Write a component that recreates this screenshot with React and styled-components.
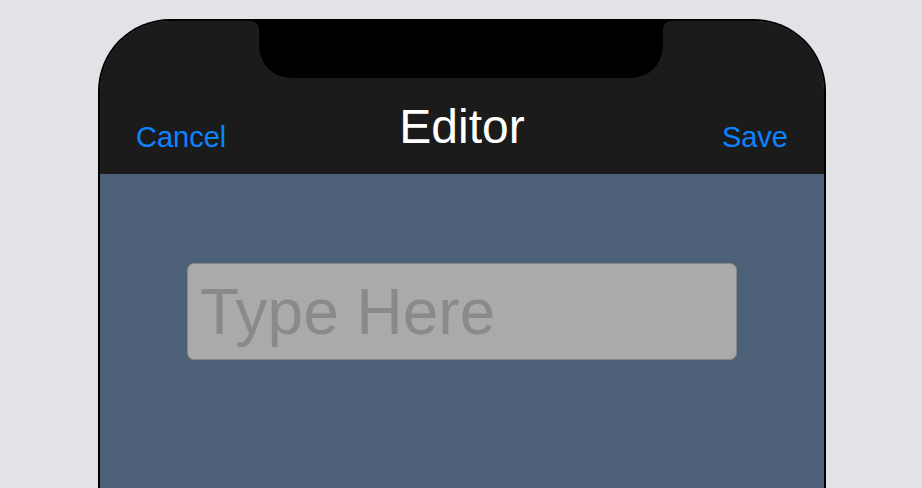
import React from "react";
import styled, { createGlobalStyle } from "styled-components";

const GlobalStyle = createGlobalStyle`
  html, body {
    margin: 0;
    padding: 0;
    height: 100%;
    overflow: hidden;
    background: #e2e3e7;
  }
  body {
    font-family: "Liberation Sans", Arial, sans-serif;
  }
`;

const Editor = () => {
  const [text, setText] = React.useState("");
  return (
    <>
      <GlobalStyle />
      <Page>
        <Phone>
          <Notch />
          <NavBar>
            <NavButton>Cancel</NavButton>
            <Title>Editor</Title>
            <NavButton $end>Save</NavButton>
          </NavBar>
          <Content>
            <TextField
              placeholder="Type Here"
              value={text}
              onChange={(e) => setText(e.target.value)}
            />
          </Content>
        </Phone>
      </Page>
    </>
  );
};

export default Editor;

const Page = styled.div`
  display: flex;
  justify-content: center;
  padding: 19px 0 0 2px;
  height: 100vh;
  box-sizing: border-box;
  overflow: hidden;
`;

const Phone = styled.div`
  position: relative;
  width: 728px;
  height: 100%;
  box-sizing: border-box;
  border: 2px solid #000;
  border-bottom: none;
  border-radius: 72px 72px 0 0;
  background: #4c6178;
  overflow: hidden;
  display: flex;
  flex-direction: column;
`;

const Notch = styled.div`
  position: absolute;
  top: 0;
  left: 159px;
  width: 404px;
  height: 57px;
  background: #000;
  border-radius: 0 0 32px 32px;

  &::before,
  &::after {
    content: "";
    position: absolute;
    top: 0;
    width: 8px;
    height: 8px;
  }
  &::before {
    left: -8px;
    background: radial-gradient(circle at 0 100%, transparent 7.5px, #000 8px);
  }
  &::after {
    right: -8px;
    background: radial-gradient(circle at 100% 100%, transparent 7.5px, #000 8px);
  }
`;

const NavBar = styled.header`
  height: 153px;
  flex-shrink: 0;
  box-sizing: border-box;
  background: #1b1b1b;
  display: grid;
  grid-template-columns: 1fr auto 1fr;
  align-items: end;
  padding: 0 36px 22px;
`;

const NavButton = styled.button`
  justify-self: ${(p) => (p.$end ? "end" : "start")};
  border: none;
  background: none;
  padding: 0;
  font-family: inherit;
  font-size: 29px;
  line-height: 1;
  color: #0a84ff;
  cursor: pointer;
`;

const Title = styled.h1`
  margin: 0 0 1px;
  font-size: 48px;
  font-weight: 400;
  line-height: 1;
  color: #fff;
`;

const Content = styled.main`
  flex: 1;
  display: flex;
  justify-content: center;
  align-items: flex-start;
  padding-top: 89px;
`;

const TextField = styled.input`
  width: 550px;
  height: 97px;
  box-sizing: border-box;
  padding: 0 12px;
  border: 1.5px solid #878787;
  border-radius: 7px;
  background: #aaaaaa;
  font-family: inherit;
  font-size: 64px;
  color: #333;
  outline: none;

  &::placeholder {
    color: #8a8a8a;
  }
`;
